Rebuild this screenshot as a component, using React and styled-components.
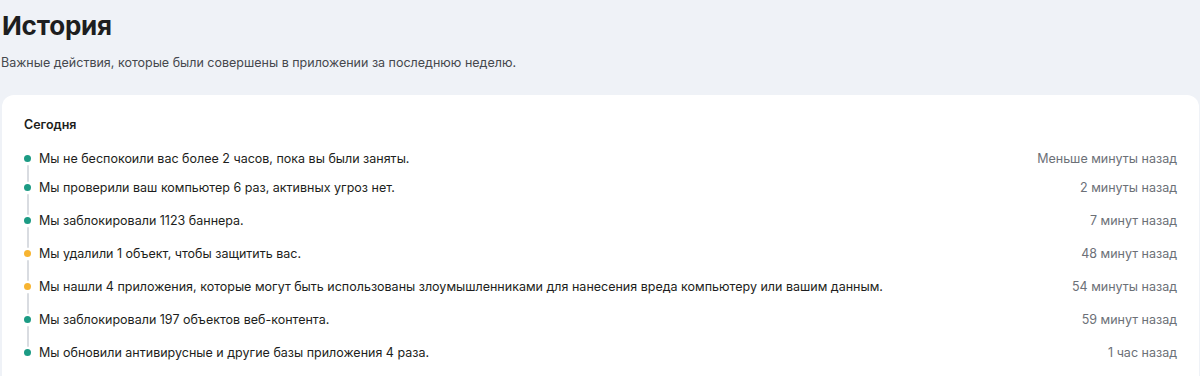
import React from 'react';
import styled, { createGlobalStyle } from 'styled-components';

const Global = createGlobalStyle`
  body {
    margin: 0;
    background: #eff2f7;
    font-family: Inter, "Noto Sans", Arial, sans-serif;
    color: #1d1e20;
  }
`;

const Page = styled.div`
  padding: 0 1px 0 2px;
`;

const Header = styled.header`
  padding: 9px 0 0 0;
  height: 95px;
  box-sizing: border-box;
`;

const Title = styled.h1`
  margin: 0;
  font-size: 26px;
  line-height: 33px;
  font-weight: 700;
  letter-spacing: -0.2px;
`;

const Subtitle = styled.p`
  margin: 13px 0 0 -1px;
  font-size: 12.5px;
  line-height: 16px;
  color: #45484d;
`;

const Card = styled.section`
  background: #fff;
  border-radius: 12px;
  padding: 22px 22px 20px 22px;
  min-height: 300px;
`;

const Day = styled.h2`
  margin: 0;
  font-size: 12.5px;
  line-height: 16px;
  font-weight: 600;
`;

const List = styled.ul`
  list-style: none;
  margin: 13px 0 0 0;
  padding: 0;
`;

const Row = styled.li`
  position: relative;
  display: flex;
  align-items: center;
  height: 33px;
  font-size: 12.5px;
  &:first-child {
    height: 25px;
  }
  &:not(:last-child)::after {
    content: '';
    position: absolute;
    left: 3px;
    width: 2px;
    top: calc(50% + 6px);
    bottom: -10.5px;
    background: #d9dce1;
    border-radius: 1px;
  }
`;

const Dot = styled.span`
  flex: none;
  width: 7px;
  height: 7px;
  border-radius: 50%;
  background: ${p => (p.$warn ? '#f7b431' : '#1c9b84')};
  margin-right: 8px;
`;

const Text = styled.span`
  flex: 1;
  color: #1d1e20;
`;

const Time = styled.span`
  color: #6c7077;
  text-align: right;
`;

const events = [
  { text: 'Мы не беспокоили вас более 2 часов, пока вы были заняты.', time: 'Меньше минуты назад' },
  { text: 'Мы проверили ваш компьютер 6 раз, активных угроз нет.', time: '2 минуты назад' },
  { text: 'Мы заблокировали 1123 баннера.', time: '7 минут назад' },
  { text: 'Мы удалили 1 объект, чтобы защитить вас.', time: '48 минут назад', warn: true },
  { text: 'Мы нашли 4 приложения, которые могут быть использованы злоумышленниками для нанесения вреда компьютеру или вашим данным.', time: '54 минуты назад', warn: true },
  { text: 'Мы заблокировали 197 объектов веб-контента.', time: '59 минут назад' },
  { text: 'Мы обновили антивирусные и другие базы приложения 4 раза.', time: '1 час назад' },
];

export default function App() {
  return (
    <Page>
      <Global />
      <Header>
        <Title>История</Title>
        <Subtitle>Важные действия, которые были совершены в приложении за последнюю неделю.</Subtitle>
      </Header>
      <Card>
        <Day>Сегодня</Day>
        <List>
          {events.map((e, i) => (
            <Row key={i}>
              <Dot $warn={e.warn} />
              <Text>{e.text}</Text>
              <Time>{e.time}</Time>
            </Row>
          ))}
        </List>
      </Card>
    </Page>
  );
}
